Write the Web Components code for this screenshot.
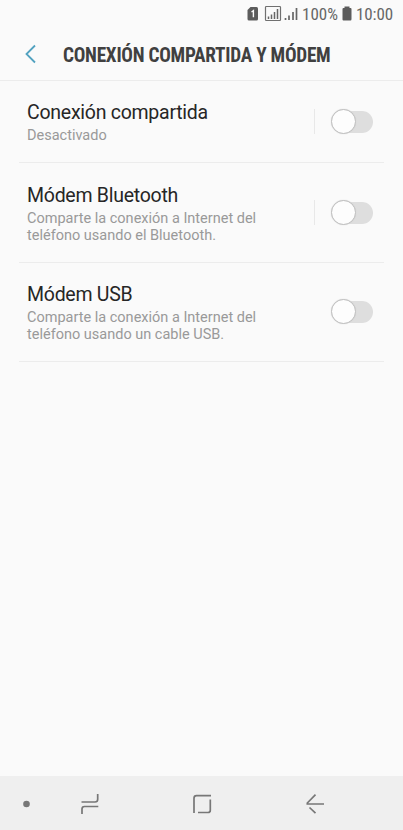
<!DOCTYPE html>
<html lang="es"><head><meta charset="utf-8"><title>Conexión compartida y módem</title>
<style>html,body{margin:0;height:100%;background:#fafafa;font-family:Roboto,"Liberation Sans",sans-serif}</style></head>
<body><phone-screen></phone-screen>
<script>
const define=(name,html)=>customElements.define(name,class extends HTMLElement{
 constructor(){super();const t=document.createElement('template');t.innerHTML=html;this.attachShadow({mode:'open'}).append(t.content.cloneNode(true));}
});
define('status-bar',`<style>:host{display:flex;height:28px;box-sizing:border-box;color:#666;font-size:17px;line-height:28px}
svg{display:block;margin-left:246px;flex:none}.p,.t{font-stretch:75%;white-space:nowrap;flex:none}.p{width:39px;margin-left:2px}.b{margin:0}.t{margin-left:4px;letter-spacing:-.1px}</style>
<svg width="54" height="28"><path d="M4.500 7H10.500Q12 7 12 8.500V19Q12 20.500 10.500 20.500H3Q1.500 20.500 1.500 19V10Z" fill="#5c5c5c"/><path d="M5.500 12L7.400 10.700V17.300" fill="none" stroke="#fafafa" stroke-width="1.400"/>
<rect x="19.500" y="6.500" width="15" height="14" rx=".8" fill="none" stroke="#707070" stroke-width="1.200"/>
<path d="M22.500 19V16.500M25.500 19V14.500M28.500 19V12M31.500 19V9" stroke="#666" stroke-width="1.500"/>
<path d="M39.500 20V18M43 20V15.500M47 20V12M50.500 20V8" stroke="#666" stroke-width="1.700"/></svg>
<span class="p">100%</span><svg class="b" width="11" height="28"><path d="M3.500 6.500H8.500V8H9.500Q10.500 8 10.500 9V19Q10.500 20.500 9.500 20.500H2.500Q1.500 20.500 1.500 19.500V9Q1.500 8 2.500 8H3.500Z" fill="#5c5c5c"/></svg><span class="t">10:00</span>`);
define('title-bar',`<style>:host{display:flex;height:53px;box-sizing:border-box;border-bottom:1px solid #ececec;color:#404040}
svg{margin-left:24px;flex:none}h1{margin:0 0 0 23px;font-size:19.300px;letter-spacing:-.26px;line-height:55px;font-weight:700;font-stretch:75%;white-space:nowrap}</style>
<svg width="16" height="52"><path d="M11 17.500L2.500 26L11 34.500" fill="none" stroke="#52a2c0" stroke-width="1.800"/></svg><h1><slot></slot></h1>`);
define('toggle-switch',`<style>:host{display:grid;align-items:center;width:42px;height:25px}
b,i{grid-area:1/1;box-sizing:border-box}b{width:36px;height:22px;margin-left:6px;border-radius:11px;background:#dedede}
i{width:25px;height:25px;border:1px solid #bfbfbf;border-radius:50%;background:#fdfdfd;box-shadow:0 0 1px #ccc}</style><b></b><i></i>`);
define('setting-row',`<style>:host{display:flex;height:var(--h,99px);margin:0 19px;padding:0 11px 0 8px;box-sizing:border-box;border-bottom:1px solid #ececec;align-items:flex-start;justify-content:space-between}
.x{padding-top:var(--t,20px);width:260px}h2{margin:0;font-size:19.500px;letter-spacing:-.26px;line-height:25px;font-weight:400;color:#262626;white-space:nowrap}
p{margin:2px 0 0;font-size:14.500px;line-height:17px;color:#999;white-space:nowrap}
.r{display:flex;align-items:center;gap:16px;padding-top:var(--s,37px)}.d{width:1px;height:25px;background:#e8e8e8}:host([plain]) .d{display:none}</style>
<div class="x"><h2><slot name="title"></slot></h2><p><slot></slot></p></div><div class="r"><span class="d"></span><toggle-switch></toggle-switch></div>`);
define('nav-bar',`<style>:host{display:flex;height:54px;background:#efefef;align-items:center;color:#777}svg{display:block}</style>
<svg width="403" height="54" fill="none" stroke="#777" stroke-width="1.700"><circle cx="26.500" cy="28" r="3.300" fill="#777" stroke="none"/>
<path d="M81.500 26H95Q97.700 26 97.700 23.300V18M98.300 30.500H84.500Q82 30.500 82 33V38"/>
<path d="M211 19.700H196.500Q194 19.700 194 22.200V37M198 36.500H208Q210.300 36.500 210.300 34.200V23.500"/>
<path d="M315.500 18.700L307.300 27V28H324M309.500 31.500L315.500 37.200"/></svg>`);
define('phone-screen',`<style>:host{display:flex;flex-direction:column;width:403px;height:830px;overflow:hidden;background:#fafafa}main{flex:1}</style>
<status-bar></status-bar><title-bar>CONEXIÓN COMPARTIDA Y MÓDEM</title-bar><main>
<setting-row style="--h:82px;--t:19px;--s:28px"><span slot="title">Conexión compartida</span>Desactivado</setting-row>
<setting-row style="--h:100px"><span slot="title">Módem Bluetooth</span>Comparte la conexión a Internet del<br>teléfono usando el Bluetooth.</setting-row>
<setting-row plain style="--t:19px;--s:36px"><span slot="title">Módem USB</span>Comparte la conexión a Internet del<br>teléfono usando un cable USB.</setting-row></main><nav-bar></nav-bar>`);
</script></body></html>
